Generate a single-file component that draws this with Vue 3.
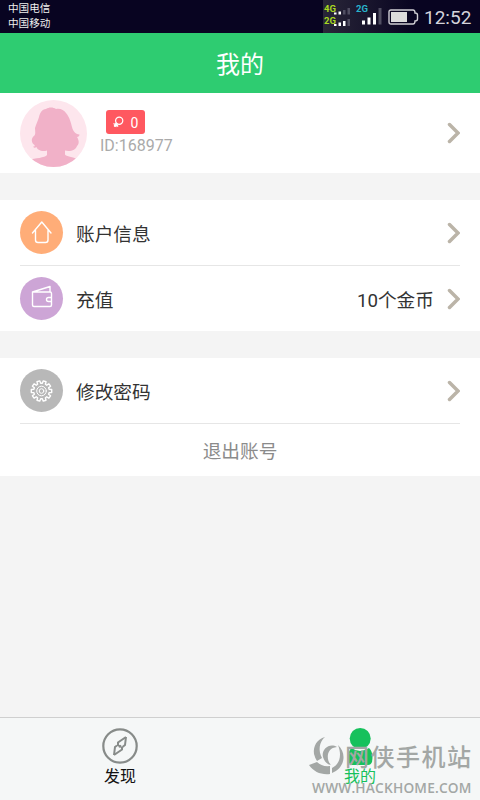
<script setup>
const gearTeeth = Array.from({ length: 10 }, (_, i) => {
  const p = (r, d) => {
    const a = ((i * 36 + d) * Math.PI) / 180
    return `${(Math.cos(a) * r).toFixed(2)},${(Math.sin(a) * r).toFixed(2)}`
  }
  return [p(7.8, -12), p(10.3, -8), p(10.3, 8), p(7.8, 12)].join(' ')
}).join(' ')
</script>

<template>
  <div class="screen">
    <header class="status">
      <div class="carriers"><span>中国电信</span><span>中国移动</span></div>
      <div class="indicators">
        <svg class="signals" width="60" height="33" viewBox="0 0 60 33">
          <g class="net" font-size="9.5">
            <text x="1" y="12" fill="#a8d820">4G</text>
            <text x="1" y="24" fill="#a8d820">2G</text>
            <text x="33" y="12" fill="#28b4cc">2G</text>
          </g>
          <g fill="#fff">
            <path d="M11 12.500h2.500v2h-2.500zM15.500 11.500h2.500v3h-2.500zM11 24h2.500v2h-2.500zM15.500 22.500h2.500v3.500h-2.500zM20 21h2.500v5h-2.500z" />
            <path d="M39 20.500h3v4h-3zM44.500 17.500h3v7h-3zM50 13h3v11.500h-3z" />
          </g>
          <path fill="#514f62" d="M20 10h2.500v4.500h-2.500zM24.500 8h2.500v6.500h-2.500zM24.500 19h2.500v7h-2.500zM55.500 8h3v16.500h-3z" />
        </svg>
        <svg class="battery" width="31" height="16" viewBox="0 0 31 16">
          <path d="M3 1H25Q27 1 27 4Q29.500 4 29.500 6V10Q29.500 12 27 12Q27 15 25 15H3Q1 15 1 13V3Q1 1 3 1Z" fill="none" stroke="#cfced4" stroke-width="1.400" />
          <rect x="3" y="3" width="16" height="10" fill="#dcdcdc" />
        </svg>
        <span class="clock">12:52</span>
      </div>
    </header>

    <h1 class="title">我的</h1>

    <section class="profile">
      <svg class="avatar" width="67" height="67" viewBox="0 0 67 67">
        <defs><clipPath id="face"><circle cx="33.500" cy="33.500" r="33.500" /></clipPath></defs>
        <g clip-path="url(#face)">
          <rect width="67" height="67" fill="#fde6ed" />
          <path fill="#f1b1c8" d="M26 9C29 7 33 7 36 9C40 8 44 10 46 13C50 18 51 23 52 27C53 31 55 34 59.500 34.500C59.500 36 58.500 37 57 37C59.500 41 59 44 57 46C56 50 50 52 45 50.500V54.500C46 57 53 56 58 60V68H9V60C15 58 25 58 27 55V50.500C22 52 17 50 16.500 47C15 48 14 48 13 46.500C14.500 46.500 15 46 14.500 45C11 43 11 38 14 36C16 34 15 31 15 28C16 24 18 21 19 17C20 13 22 9 26 9Z" />
        </g>
      </svg>
      <div class="identity">
        <span class="badge">
          <svg width="11" height="13" viewBox="0 0 11 13" fill="none" stroke="#fff" stroke-width="1.200">
            <circle cx="6.200" cy="4.700" r="3.600" />
            <path d="M3.300 7L1 9.500M.5 7.500L5.200 10.500M3.500 7.500L2.700 11M1 10.500L5 8.800" />
          </svg>
          <b>0</b>
        </span>
        <span class="uid">ID:168977</span>
      </div>
      <svg class="arrow" width="14" height="22" viewBox="0 0 14 22"><path d="M3.500 2.500L12 11L3.500 19.500" /></svg>
    </section>

    <section class="group">
      <div class="row">
        <span class="disc orange">
          <svg width="43" height="43" viewBox="0 0 43 43"><path d="M12.500 22L21.800 11L31 22M15.500 19.500V29Q15.500 31.500 18 31.500H25.500Q28 31.500 28 29V19.500" /></svg>
        </span>
        <span class="label">账户信息</span>
        <svg class="arrow" width="14" height="22" viewBox="0 0 14 22"><path d="M3.500 2.500L12 11L3.500 19.500" /></svg>
      </div>
      <div class="row second">
        <span class="disc purple">
          <svg width="43" height="43" viewBox="0 0 43 43"><path d="M12.500 15H30Q31.500 15 31.500 16.500V28Q31.500 29.500 30 29.500H14Q12.500 29.500 12.500 28ZM12.500 15L30 9.500V15M31.500 20.500H28.500Q26.500 20.500 26.500 22.500T28.500 24.500H31.500" /></svg>
        </span>
        <span class="label">充值</span>
        <span class="value">10个金币</span>
        <svg class="arrow" width="14" height="22" viewBox="0 0 14 22"><path d="M3.500 2.500L12 11L3.500 19.500" /></svg>
      </div>
    </section>

    <section class="group">
      <div class="row">
        <span class="disc gray">
          <svg width="43" height="43" viewBox="0 0 43 43">
            <g transform="translate(21.500 22)">
              <polygon :points="gearTeeth" />
              <circle r="4.800" stroke-width="1" /><circle r="2.300" stroke-width="1" />
            </g>
          </svg>
        </span>
        <span class="label">修改密码</span>
        <svg class="arrow" width="14" height="22" viewBox="0 0 14 22"><path d="M3.500 2.500L12 11L3.500 19.500" /></svg>
      </div>
      <div class="logout">退出账号</div>
    </section>

    <nav class="tabs">
      <div class="tab">
        <svg width="38" height="38" viewBox="0 0 38 38">
          <circle cx="19" cy="19" r="16.700" fill="none" stroke="#878b89" stroke-width="2.200" />
          <path d="M25 10L17 15.500V19M25 10L24 18L21.500 20M13 28L14 20L16 18.500M13 28L21 22.500V20" fill="none" stroke="#878b89" stroke-width="2" />
          <circle cx="19" cy="19.200" r="1.500" fill="#878b89" />
        </svg>
        <span>发现</span>
      </div>
      <div class="tab active">
        <svg width="38" height="38" viewBox="0 0 38 38" fill="#16c15c">
          <circle cx="19.200" cy="11.500" r="10.500" />
          <path d="M10.500 21Q19 27 28 21Q31.500 24 31.500 31Q31.500 38 27 38H11.500Q7 38 7 31Q7 24 10.500 21Z" />
        </svg>
        <span>我的</span>
      </div>
    </nav>

    <div class="watermark">
      <svg class="mark" width="36" height="38" viewBox="0 0 36 38">
        <path fill="#a3a7a5" d="M16 0C8 2 4 9 5 17Q6 21 8 24L13 21C9 14 10 5 16 0Z" />
        <path fill="#a3a7a5" d="M0 28L8 25Q13 30 21 29V37C12 38 5 35 0 28Z" />
        <path fill="#a3a7a5" d="M28 10C20 5 12 13 14 20Q16 27 22 28C17 23 17 11 28 10Z" />
        <path fill="#a3a7a5" d="M29 8C38 16 36 31 23 36V31C31 27 33 18 29 8Z" />
      </svg>
      <span class="brand">网侠手机站</span>
      <span class="site">WWW.HACKHOME.COM</span>
    </div>
  </div>
</template>

<style>
body { margin: 0; }
</style>

<style scoped>
.screen {
  position: relative;
  display: flex;
  flex-direction: column;
  width: 480px;
  height: 800px;
  overflow: hidden;
  background: #f4f4f4;
  color: #333;
  font-family: Roboto, "Noto Sans CJK SC", sans-serif;
}
.status {
  display: flex;
  justify-content: space-between;
  flex: none;
  height: 33px;
  background: #080421;
  color: #eee;
}
.carriers {
  display: flex;
  flex-direction: column;
  padding: 2px 0 0 8px;
  font-size: 10.600px;
  line-height: 14.500px;
}
.indicators {
  display: flex;
  align-items: center;
  padding-right: 8px;
  background: linear-gradient(90deg, #292638, #080421 90px);
}
.net { font-family: Roboto, sans-serif; font-weight: 700; }
.battery { margin: 1px 0 0 5px; }
.clock {
  width: 48px;
  margin-left: 5px;
  padding-top: 2px;
  color: #d4d3da;
  font-size: 19px;
  font-weight: 400;
  white-space: nowrap;
}
.title {
  flex: none;
  height: 60px;
  margin: 0;
  background: #2ecc71;
  color: #fff;
  font-size: 24px;
  font-weight: 400;
  line-height: 65px;
  text-align: center;
}
.profile {
  display: flex;
  align-items: center;
  flex: none;
  height: 80px;
  padding: 0 20px;
  background: #fff;
}
.identity {
  display: flex;
  flex-direction: column;
  align-items: flex-start;
  margin-left: 13px;
}
.badge {
  display: flex;
  align-items: center;
  justify-content: center;
  gap: 7px;
  width: 39px;
  height: 24px;
  margin-left: 6px;
  border-radius: 3px;
  background: #ff5860;
  color: #fff;
  font-size: 14px;
}
.badge b { font-weight: 400; padding-top: 1px; }
.uid { margin-top: 2px; color: #aaa; font-size: 16px; line-height: 20px; }
.arrow {
  flex: none;
  margin-left: auto;
  fill: none;
  stroke: #bbb4a8;
  stroke-width: 3.500;
  stroke-linecap: round;
}
.group { flex: none; margin-top: 27px; padding: 0 20px; background: #fff; }
.profile + .group { height: 131px; }
.row {
  display: flex;
  align-items: center;
  box-sizing: border-box;
  height: 66px;
  border-bottom: 1px solid #e6e6e6;
}
.second { height: 65px; border-bottom: 0; }
.disc { width: 43px; height: 43px; border-radius: 50%; }
.disc svg {
  display: block;
  fill: none;
  stroke: #fff;
  stroke-width: 1.400;
  stroke-linejoin: round;
  stroke-linecap: round;
}
.orange { background: #ffad78; }
.purple { background: #cda5d6; }
.gray { background: #b8b8b8; }
.label { margin-left: 13px; font-size: 18.700px; }
.value { margin-left: auto; font-size: 18.700px; }
.value + .arrow { margin-left: 12px; }
.logout {
  height: 52px;
  color: #8b8b8b;
  font-size: 18.700px;
  line-height: 56px;
  text-align: center;
}
.tabs {
  display: flex;
  box-sizing: border-box;
  height: 83px;
  margin-top: auto;
  border-top: 1px solid #cfcfcf;
  background: #f5f7f7;
}
.tab {
  display: flex;
  flex: 1;
  flex-direction: column;
  align-items: center;
  padding-top: 9px;
  color: #111;
  font-size: 16px;
  line-height: 23px;
}
.active { color: #16c15c; }
.watermark {
  position: absolute;
  right: 4px;
  bottom: 0;
  display: grid;
  grid-template-columns: 36px 1fr;
  grid-template-rows: 38px 25px;
  width: 167px;
  color: #a3a7a5;
}
.brand {
  font-size: 24px;
  font-weight: 500;
  letter-spacing: 1.500px;
  line-height: 42px;
  white-space: nowrap;
}
.site {
  grid-column: 1 / 3;
  padding-left: 3px;
  font-family: "Open Sans", sans-serif;
  font-size: 13.700px;
  font-weight: 600;
  letter-spacing: .2px;
  line-height: 26px;
  white-space: nowrap;
}
</style>
